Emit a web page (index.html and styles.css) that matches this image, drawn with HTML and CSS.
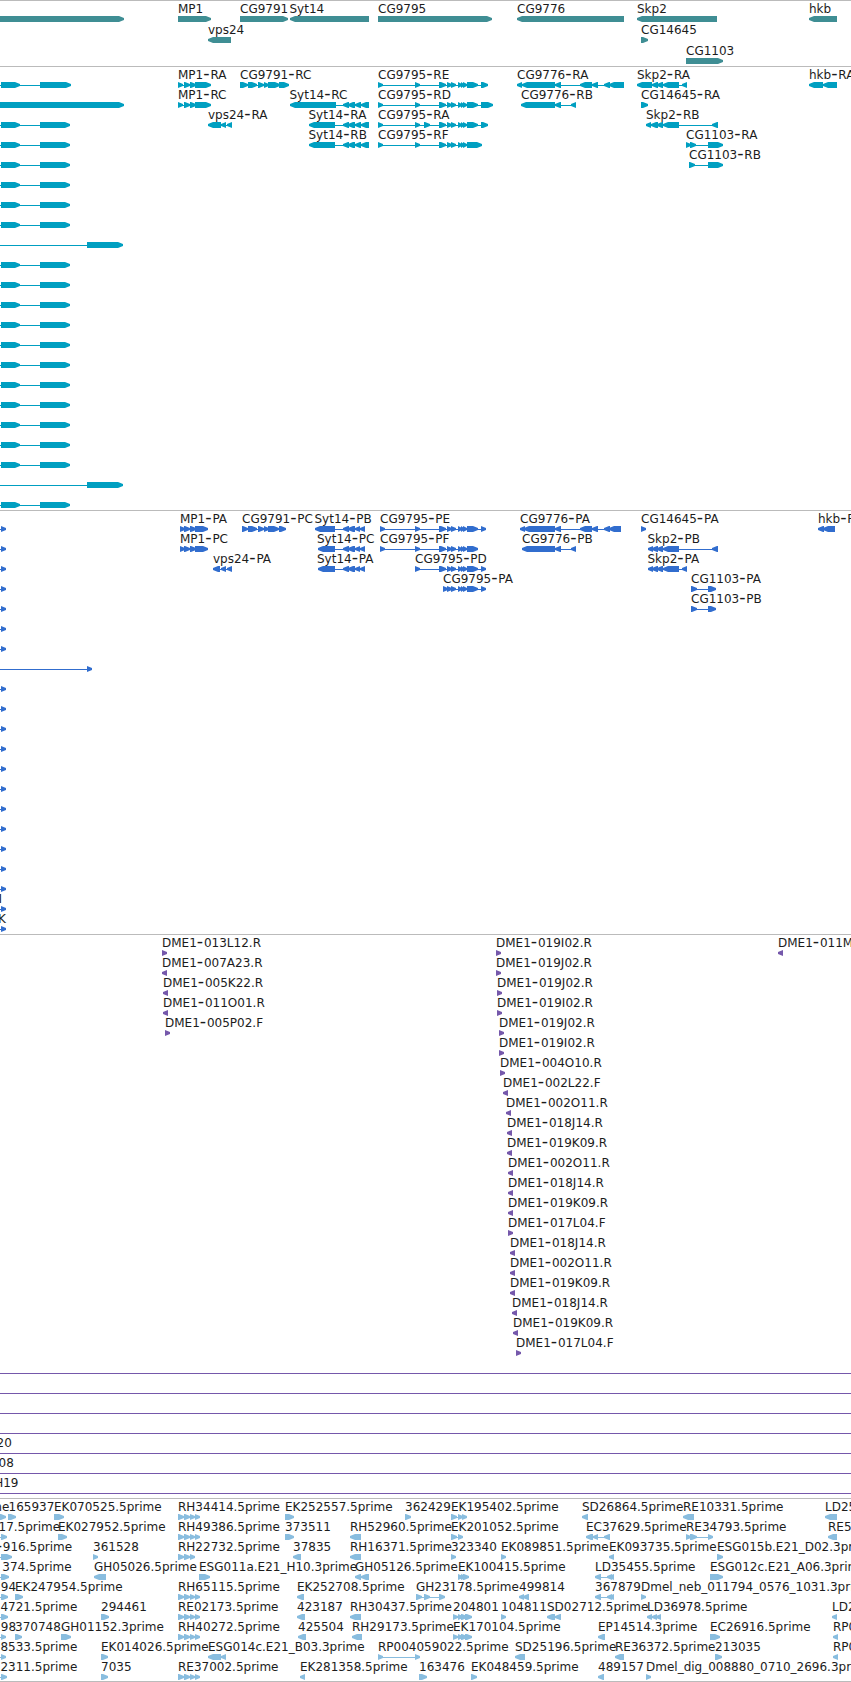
FILE: index.html
```html
<!DOCTYPE html>
<html lang="en">
<head>
<meta charset="utf-8">
<title>Genome tracks</title>
<link rel="stylesheet" href="styles.css">
</head>
<body>
<main class="browser" id="browser"></main>
<script src="tracks.js"></script>
</body>
</html>
```

FILE: styles.css
```css
body {
  margin: 0;
  background: #fff;
}

.browser {
  display: flex;
  flex-direction: column;
  width: 851px;
  height: 1682px;
  overflow: hidden;
  box-sizing: border-box;
  border-bottom: 1px solid #bbb;
}

.track {
  flex: none;
  border-top: 1px solid #bbb;
  padding: 2px 0 1px;
}

.track-gene {
  color: #3f8e94;
  padding-bottom: 0;
}

.track-transcript { color: #009fc1; }
.track-protein { color: #316dce; }
.track-bac { color: #7558ab; }

.track-est {
  color: #89bddf;
  padding-bottom: 0;
}

.row {
  display: block;
  width: 851px;
  height: 20px;
  overflow: visible;
}

.track-gene .row { height: 21px; }

.shape { fill: currentColor; }

.label {
  font-family: "DejaVu Sans", sans-serif;
  font-size: 12px;
  fill: #1c1c1c;
}

.dash {
  font-family: "Liberation Sans", sans-serif;
  font-size: 19px;
  letter-spacing: 0.8px;
  baseline-shift: -1px;
}
```

FILE: tracks.js
```js
// Each row lists features separated by ";".
// A feature is: label-x label direction start-end,start-end...
// "~" stands for a feature without a label.
const small = "0 ~ > 0:0,1:20,40:70";
const far = "0 ~ > 0:0,87:123";
const stub = "0 ~ > 0:0,1:6";

const mpR = "178:183,184:190,190:196,195:211";
const mpP = "180:185,184:190,190:196,195:208";
const mid95 = "439:446,447:452,451:456,458:462,461:464,463:467";
const sytEndR = "343:349,348:355,355:361,361:369";
const sytEndP = "343:349,348:355,355:360,360:365";
const rh = "178:184,184:190,190:195,195:200";
const full = "0 ~ > 0:0,860:866";

const tracks = [
  { kind: "gene", rows: [
    "0 ~ > 0:124;178 MP1 > 178:211;240 CG9791 > 240:288;289.5 Syt14 < 290:369;378 CG9795 > 378:492;517 CG9776 < 517:624;637 Skp2 < 637:717;809 hkb < 809:837",
    "208 vps24 < 208:231;641 CG14645 > 641:648",
    "686 CG1103 > 686:723"
  ] },
  { kind: "transcript", rows: [
    `0 ~ > 0:0,1:20,40:71;178 MP1-RA > ${mpR};240 CG9791-RC > 240:248,248:257,258:264,264:269,268:280,279:289;378 CG9795-RE > 378:383,415:420,${mid95},467:478,481:488;517 CG9776-RA < 517:522,522:555,555:561,580:592,592:598,604:610,609:624;637 Skp2-RA < 637:652,652:658,657:663,663:679,682:687;809 hkb-RA < 809:823,823:837`,
    `0 ~ > 0:124;178 MP1-RC > ${mpR};289.5 Syt14-RC < 290:336,${sytEndR};378 CG9795-RD > 378:383,415:420,${mid95},467:478,481:493;521 CG9776-RB < 521:555,555:561,571:576;641 CG14645-RA > 641:648`,
    `${small};208 vps24-RA < 208:221,221:226,227:232;308.5 Syt14-RA < 309:335,${sytEndR};378 CG9795-RA > 378:383,415:420,424:430,${mid95},467:478,481:488;646 Skp2-RB < 646:651,651:658,657:663,663:679,712:718`,
    `${small};308.5 Syt14-RB < 309:335,${sytEndR};378 CG9795-RF > 378:383,415:420,${mid95},467:482;686 CG1103-RA > 686:691,690:696,708:723`,
    `${small};689 CG1103-RB > 689:695,708:723`,
    small, small, small, far,
    small, small, small, small, small, small, small, small, small, small, small,
    far, small
  ] },
  { kind: "protein", rows: [
    `${stub};180 MP1-PA > ${mpP};242 CG9791-PC > 242:248,248:257,258:264,264:269,268:279,279:286;314.5 Syt14-PB < 315:335,${sytEndP};380 CG9795-PE > 380:385,415:420,${mid95},467:478,481:486;520 CG9776-PA < 520:525,524:555,555:561,580:592,592:598,604:610,609:621;641 CG14645-PA > 641:646;818 hkb-PA < 818:824,823:835`,
    `${stub};180 MP1-PC > ${mpP};317 Syt14-PC < 318:335,${sytEndP};380 CG9795-PF > 380:385,415:420,${mid95},467:478;522 CG9776-PB < 522:555,555:561,571:576;647.5 Skp2-PB < 648:653,652:658,657:663,663:679,712:718`,
    `${stub};213 vps24-PA < 213:220,221:226,227:232;317 Syt14-PA < 318:335,${sytEndP};415 CG9795-PD > 415:420,${mid95},467:478,481:486;647.5 Skp2-PA < 648:653,652:658,657:663,663:679,682:687`,
    `${stub};443 CG9795-PA > 443:448,447:452,451:456,458:462,461:464,463:467,467:478,481:486;691 CG1103-PA > 691:697,708:716`,
    `${stub};691 CG1103-PB > 691:697,708:716`,
    stub, stub, "0 ~ > 0:0,87:92",
    stub, stub, stub, stub, stub, stub, stub, stub, stub, stub, stub,
    "-1.4 I > 0:0,1:6",
    "-2 K > 0:0,1:6"
  ] },
  { kind: "bac", rows: [
    "162 DME1-013L12.R > 162:167;496 DME1-019I02.R > 496:501;778 DME1-011M < 778:783",
    "162 DME1-007A23.R < 162:167;496 DME1-019J02.R > 496:501",
    "163 DME1-005K22.R < 163:168;497 DME1-019J02.R > 497:502",
    "163 DME1-011O01.R < 163:168;497 DME1-019I02.R > 497:502",
    "165 DME1-005P02.F > 165:170;499 DME1-019J02.R > 499:504",
    "499 DME1-019I02.R > 499:504",
    "500 DME1-004O10.R > 500:505",
    "503 DME1-002L22.F < 503:508",
    "506 DME1-002O11.R < 506:511",
    "507 DME1-018J14.R < 507:512",
    "507 DME1-019K09.R < 507:512",
    "508 DME1-002O11.R < 508:513",
    "508 DME1-018J14.R < 508:513",
    "508 DME1-019K09.R < 508:513",
    "508 DME1-017L04.F > 508:513",
    "510 DME1-018J14.R < 510:515",
    "510 DME1-002O11.R < 510:515",
    "510 DME1-019K09.R < 510:515",
    "512 DME1-018J14.R < 512:517",
    "513 DME1-019K09.R < 513:518",
    "516 DME1-017L04.F > 516:521",
    full, full, full, full,
    "-3.5 20 > 0:0,860:866",
    "-1.5 08 > 0:0,860:866",
    "-5.8 H19 > 0:0,860:866"
  ] },
  { kind: "est", rows: [
    `-25.6 prime > 0:6;8.5 165937 > 8:16;54 EK070525.5prime > 54:64;178 RH34414.5prime > ${rh};285 EK252557.5prime > 285:294;405 362429 > 405:411;451 EK195402.5prime > 451:457,458:463,462:467;582 SD26864.5prime < 582:588;683 RE10331.5prime < 683:694;825 LD25 < 825:837`,
    `-1.5 17.5prime > 0:0,1:7;58 EK027952.5prime > 58:67;178 RH49386.5prime > ${rh};285 373511 > 285:294;350 RH52960.5prime < 350:361;451 EK201052.5prime > 451:457,458:463;586 EC37629.5prime < 586:593,593:598,604:610;686 RE34793.5prime > 686:691,690:697,708:713;828 RE5 < 828:837`,
    "-4.3 -916.5prime > 0:0,1:12;93 361528 > 93:98;178 RH22732.5prime > 178:184,184:190,190:195;293 37835 < 293:301;350 RH16371.5prime < 350:361;451 323340 > 451:456;501 EK089851.5prime > 501:506;609 EK093735.5prime < 609:614;717 ESG015b.E21_D02.3prime > 717:723",
    "2.3 374.5prime > 0:0,1:9;94 GH05026.5prime < 94:106;199 ESG011a.E21_H10.3prime > 199:210;355 GH05126.5prime < 355:361,361:369;458 EK100415.5prime > 458:463,461:466,463:469;595 LD35455.5prime < 595:601,607:612,609:614;710 ESG012c.E21_A06.3prime > 710:723",
    `0.8 94 > 0:0,1:8;15 EK247954.5prime > 15:23;178 RH65115.5prime > ${rh};297 EK252708.5prime < 297:304;416 GH23178.5prime > 416:422,424:430,439:445;519 499814 < 519:524,523:529;595 367879 < 595:601,607:612,609:614;641 Dmel_neb_011794_0576_1031.3prime > 641:646`,
    `0.4 4721.5prime > 0:0,1:8;101 294461 > 101:109;178 RE02173.5prime > ${rh};297 423187 < 297:305;350 RH30437.5prime < 350:361;453 204801 > 453:458,458:463,461:467,465:472;501 104811 > 501:506;547 SD02712.5prime < 547:555,555:561;647 LD36978.5prime < 647:652,652:657,656:661;832 LD2 < 832:837`,
    `0.8 98 > 0:0,1:6;15 370748 > 15:22;61 GH01152.3prime > 61:71;178 RH40272.5prime > ${rh};298 425504 < 298:306;352 RH29173.5prime < 352:362;453 EK170104.5prime > 453:458,458:463,461:467,465:472;598 EP14514.3prime < 598:605;710 EC26916.5prime > 710:720;833 RP0 < 833:838`,
    "0.4 8533.5prime > 0:0,1:6;101 EK014026.5prime > 101:108;208 ESG014c.E21_B03.3prime < 208:221,221:226;378 RP004059022.5prime > 378:383,415:420;515 SD25196.5prime < 515:525;615 RE36372.5prime < 615:624;715 213035 > 715:722;833 RP0 < 833:838",
    `0.4 2311.5prime > 0:0,1:7;101 7035 > 101:108;178 RE37002.5prime > ${rh};300 EK281358.5prime < 300:305;419 163476 > 419:427;471 EK048459.5prime > 471:477;598 489157 < 598:604;646 Dmel_dig_008880_0710_2696.3prime > 646:651`
  ] }
];

const TOP = 13, MID = 16, BOTTOM = 19, BASELINE = 10, HEAD = 5;

function arrow(start, end, dir) {
  if (end <= start) return "";
  const head = Math.min(HEAD, end - start);
  const tip = dir === ">" ? end : start;
  const neck = dir === ">" ? end - head : start + head;
  const tail = dir === ">" ? start : end;
  return `M${tail} ${TOP}H${neck}L${tip} ${MID - 1}V${MID + 1}L${neck} ${BOTTOM}H${tail}Z`;
}

function feature(text) {
  const [x, label, dir, spans] = text.split(" ");
  const parts = spans.split(",").map(s => s.split(":").map(Number));
  const first = parts[0][0];
  const last = parts[parts.length - 1][1];
  let out = "";
  if (parts.length > 1) {
    out += `<rect class="shape" x="${first}" y="${MID}" width="${last - first - 2}" height="1"/>`;
  }
  // Spans are drawn apart so that overlapping ones both fill.
  out += parts.map(p => `<path class="shape" d="${arrow(p[0], p[1], dir)}"/>`).join("");
  if (label !== "~") {
    const body = label.replace("-", '<tspan class="dash">-</tspan>');
    out += `<text class="label" x="${x}" y="${BASELINE}">${body}</text>`;
  }
  return out;
}

document.getElementById("browser").innerHTML = tracks.map(track =>
  `<section class="track track-${track.kind}">` +
  track.rows.map(row => `<svg class="row">${row.split(";").map(feature).join("")}</svg>`).join("") +
  "</section>"
).join("");
```
